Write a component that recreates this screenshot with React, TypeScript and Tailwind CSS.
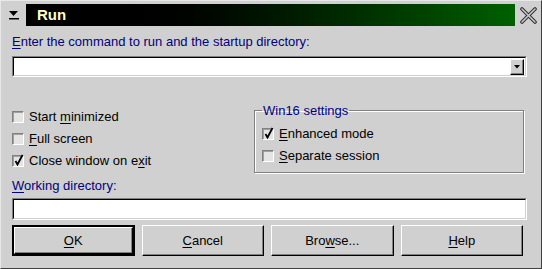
import React from "react";

const font = { fontFamily: '"Liberation Sans", Arial, sans-serif' };

function U({ children }: { children: React.ReactNode }) {
  return <span className="underline underline-offset-2">{children}</span>;
}

function Check({ checked }: { checked?: boolean }) {
  return (
    <span className="relative flex h-[12px] w-[12px] shrink-0 border border-t-[#808080] border-l-[#808080] border-r-white border-b-white bg-[#e4e4e4] shadow-[inset_1px_1px_0_#a0a0a0]">
      {checked && (
        <svg className="absolute left-[1px] top-[-2px]" width="10" height="12" viewBox="0 0 10 12">
          <path d="M1.5 7 L3.5 10.5 L8.5 1" fill="none" stroke="#000" strokeWidth="1.8" />
        </svg>
      )}
    </span>
  );
}

function CheckRow({ checked, children }: { checked?: boolean; children: React.ReactNode }) {
  return (
    <div className="flex h-[22px] items-center gap-[5px] text-[13px] text-black">
      <Check checked={checked} />
      <span>{children}</span>
    </div>
  );
}

function Button({ children, isDefault }: { children: React.ReactNode; isDefault?: boolean }) {
  return (
    <div className={isDefault ? "h-[31px] border-2 border-black" : "h-[31px]"}>
      <div className="flex h-full items-center justify-center border border-t-white border-l-white border-r-black border-b-black bg-[#d0d0d0] text-[13px] text-black shadow-[inset_-1px_-1px_0_#808080]">
        {children}
      </div>
    </div>
  );
}

export default function App() {
  return (
    <div
      style={font}
      className="flex h-[269px] w-[542px] flex-col overflow-hidden border border-t-[#e8e8e8] border-l-[#e8e8e8] border-r-[#404040] border-b-[#404040] bg-[#d0d0d0]"
    >
      {/* title bar */}
      <div className="mt-[3px] flex h-[22px] items-center">
        <div className="flex w-[25px] justify-center">
          <svg width="10" height="9" viewBox="0 0 10 9">
            <path d="M0 0 H9 L4.5 5 Z" fill="#000" />
            <rect x="0" y="7" width="10" height="1.5" fill="#000" />
          </svg>
        </div>
        <div className="flex h-full flex-1 items-center bg-linear-to-r from-black from-15% to-[#006000] pl-[11px] text-[15px] font-bold text-[#ffffc8]">
          Run
        </div>
        <div className="flex w-[26px] justify-center">
          <svg width="17" height="17" viewBox="0 0 17 17">
            <path d="M2 2 L15 15 M15 2 L2 15" stroke="#303030" strokeWidth="3.6" strokeLinecap="round" />
            <path d="M2 2 L15 15 M15 2 L2 15" stroke="#c8c8c8" strokeWidth="1.6" strokeLinecap="round" />
          </svg>
        </div>
      </div>

      <div className="flex flex-1 flex-col pl-[11px] pr-[14px]">
        <div className="mt-[8px] h-[15px] text-[13px] leading-[15px] text-[#000080]">
          <U>E</U>nter the command to run and the startup directory:
        </div>

        {/* combo */}
        <div className="mt-[7px] flex h-[21px] items-center border border-t-[#808080] border-l-[#808080] border-r-white border-b-white">
          <div className="flex h-full flex-1 items-center border border-t-black border-l-black border-r-[#d0d0d0] border-b-[#d0d0d0] bg-white pr-[1px]">
            <div className="flex-1" />
            <div className="flex h-[16px] w-[14px] items-center justify-center border border-t-white border-l-white border-r-black border-b-black bg-[#d0d0d0] shadow-[inset_-1px_-1px_0_#808080]">
              <svg width="6" height="4" viewBox="0 0 6 4">
                <path d="M0 0 H6 L3 3.5 Z" fill="#000" />
              </svg>
            </div>
          </div>
        </div>

        {/* options */}
        <div className="mt-[26px] flex items-start">
          <div className="mt-[3px] flex w-[242px] flex-col">
            <CheckRow>
              Start <U>m</U>inimized
            </CheckRow>
            <CheckRow>
              <U>F</U>ull screen
            </CheckRow>
            <CheckRow checked>
              Close window on e<U>x</U>it
            </CheckRow>
          </div>
          <fieldset className="mr-[3px] h-[70px] flex-1 border border-[#808080] px-[7px] pt-[5px] shadow-[inset_1px_1px_0_#fff,1px_1px_0_#fff]">
            <legend className="px-[1px] text-[13px] leading-[15px] text-[#000080]">Win16 settings</legend>
            <CheckRow checked>
              <U>E</U>nhanced mode
            </CheckRow>
            <CheckRow>
              <U>S</U>eparate session
            </CheckRow>
          </fieldset>
        </div>

        <div className="mt-[5px] h-[15px] text-[13px] leading-[15px] text-[#000080]">
          <U>W</U>orking directory:
        </div>
        <div className="mt-[5px] h-[22px] border border-t-[#808080] border-l-[#808080] border-r-white border-b-white">
          <div className="h-full border border-t-black border-l-black border-r-[#d0d0d0] border-b-[#d0d0d0] bg-white" />
        </div>

        <div className="mt-[5px] mr-[4px] grid grid-cols-4 gap-[7px]">
          <Button isDefault>
            <U>O</U>K
          </Button>
          <Button>
            <U>C</U>ancel
          </Button>
          <Button>
            Bro<U>w</U>se...
          </Button>
          <Button>
            <U>H</U>elp
          </Button>
        </div>
      </div>
    </div>
  );
}
